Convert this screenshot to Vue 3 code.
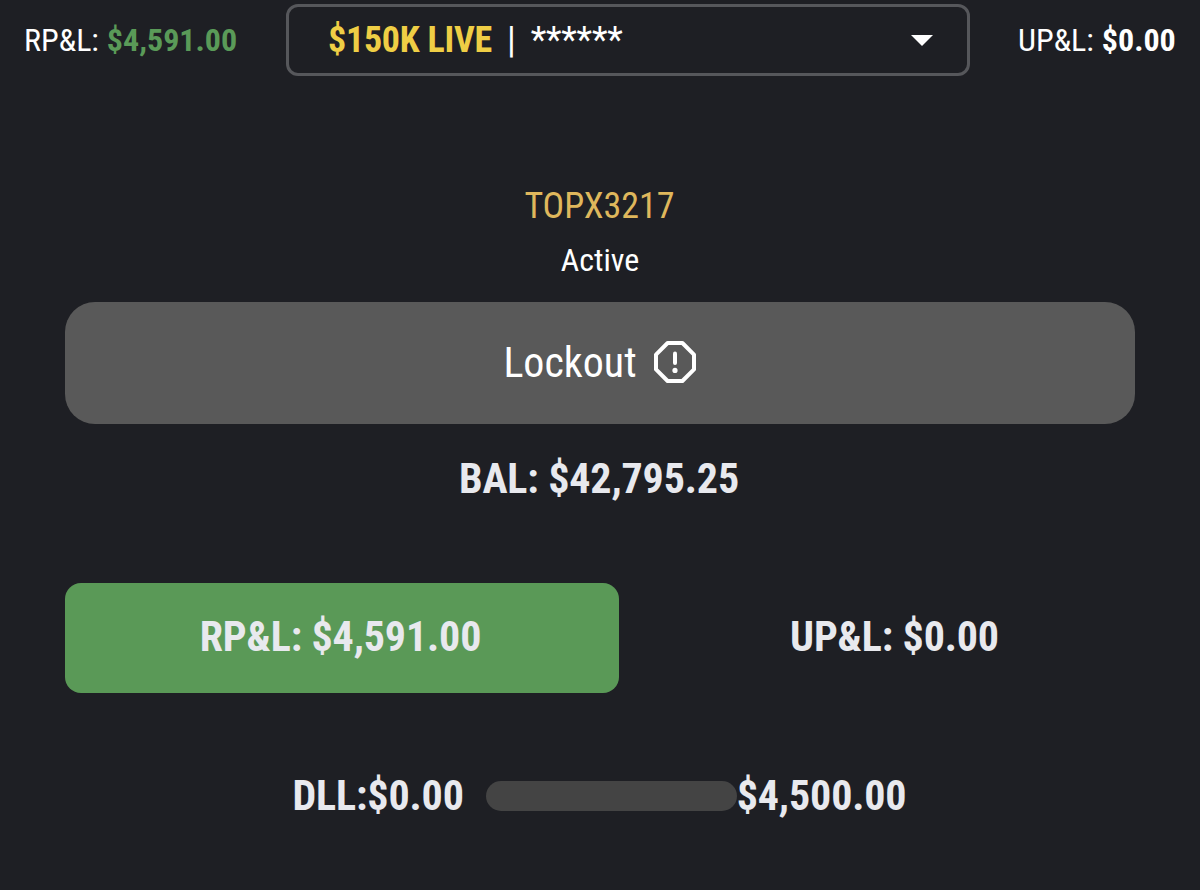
<template>
  <div class="panel">
    <header class="top-bar">
      <div class="pnl left"><span class="label">RP&amp;L:</span><b class="green">{{ account.rpl }}</b></div>
      <div class="account-select">
        <b class="plan">{{ account.plan }}</b>
        <span class="divider">|</span>
        <span class="masked">******</span>
        <svg class="caret" viewBox="0 0 22 11" width="22" height="11">
          <path d="M0 0h22L11 11z" fill="#fff" />
        </svg>
      </div>
      <div class="pnl right"><span class="label">UP&amp;L:</span><b>{{ account.upl }}</b></div>
    </header>

    <main class="content">
      <div class="account-id"><span>{{ account.id }}</span></div>
      <div class="status"><span>Active</span></div>
      <button class="lockout" type="button">
        <span class="lockout-text">Lockout</span>
        <svg class="lockout-icon" viewBox="0 0 44 44" width="44" height="44" fill="none" stroke="#fff" stroke-width="4" stroke-linejoin="round" stroke-linecap="round">
          <path d="M14.6 3h14.8L41 14.6v14.8L29.4 41H14.6L3 29.4V14.6z" />
          <path d="M22 13.6v9.4" />
          <circle cx="22" cy="30.4" r="2.6" fill="#fff" stroke="none" />
        </svg>
      </button>
      <div class="balance"><span>BAL: {{ account.balance }}</span></div>
      <div class="pnl-row">
        <div class="pnl-box positive"><span>RP&amp;L: {{ account.rpl }}</span></div>
        <div class="pnl-box"><span>UP&amp;L: {{ account.upl }}</span></div>
      </div>
      <div class="limit-row">
        <span class="limit-used">DLL:{{ account.upl }}</span>
        <div class="limit-bar"></div>
        <span class="limit-max">{{ account.limit }}</span>
      </div>
    </main>
  </div>
</template>

<script setup>
const account = {
  id: 'TOPX3217',
  plan: '$150K LIVE',
  rpl: '$4,591.00',
  upl: '$0.00',
  balance: '$42,795.25',
  limit: '$4,500.00'
}
</script>

<style>
body {
  background: #1e1f24;
}
</style>

<style scoped>
.panel {
  width: 1200px;
  height: 890px;
  overflow: hidden;
  box-sizing: border-box;
  background: #1e1f24;
  color: #fff;
  font-family: 'Roboto Condensed', Roboto, sans-serif;
  font-stretch: 75%;
  white-space: nowrap;
}

.top-bar {
  display: flex;
  padding-top: 4px;
  height: 72px;
}

.pnl {
  display: flex;
  gap: 8px;
  font-size: 32px;
  line-height: 72px;
}

.left {
  width: 262px;
  padding-left: 24px;
}

.right {
  padding-left: 48px;
}

.green {
  color: #5a9a58;
}

.account-select {
  display: flex;
  align-items: center;
  box-sizing: border-box;
  width: 684px;
  height: 72px;
  padding: 0 34px 0 39px;
  border: 3px solid #56575b;
  border-radius: 12px;
  font-size: 36px;
  line-height: 66px;
}

.plan {
  color: #efce45;
  letter-spacing: -0.25px;
}

.divider {
  margin-left: 15px;
}

.masked {
  margin-left: 15px;
  letter-spacing: -0.2px;
}

.caret {
  margin-left: auto;
}

.content {
  padding: 109px 65px 0;
  text-align: center;
}

.account-id {
  padding-right: 1px;
  color: #dfb75c;
  font-size: 36px;
  line-height: 42px;
}

.status {
  margin-top: 14px;
  font-size: 32px;
  line-height: 38px;
}

.lockout {
  display: flex;
  align-items: center;
  justify-content: center;
  gap: 16px;
  width: 1070px;
  height: 122px;
  margin-top: 23px;
  padding: 0 0 2px;
  border: none;
  border-radius: 30px;
  background: #595959;
  color: #fff;
  font: inherit;
  font-size: 42px;
}

.balance,
.pnl-box,
.limit-row {
  color: #e8e9ee;
  font-size: 42px;
  font-weight: 700;
  letter-spacing: -0.15px;
  line-height: 50px;
}

.balance {
  margin-top: 30px;
  padding-right: 2px;
}

.pnl-row {
  display: flex;
  margin-top: 79px;
}

.pnl-box {
  flex-shrink: 0;
  box-sizing: border-box;
  width: 554px;
  padding-right: 3px;
  border-radius: 16px;
  line-height: 107px;
}

.positive {
  height: 110px;
  background: #5a9957;
}

.limit-row {
  display: flex;
  align-items: center;
  justify-content: center;
  margin-top: 78px;
  padding-right: 1px;
}

.limit-bar {
  width: 251px;
  height: 30px;
  margin-left: 22px;
  border-radius: 15px;
  background: #444;
}
</style>
